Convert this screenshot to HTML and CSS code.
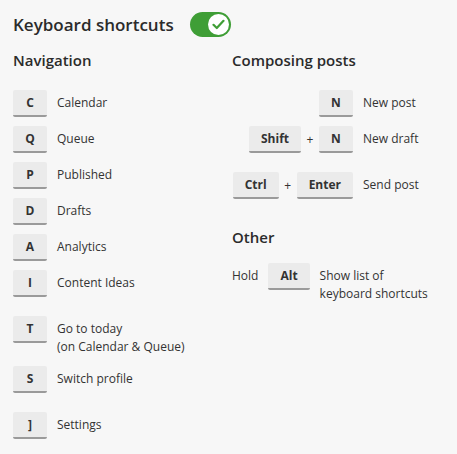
FILE: index.html
```html
<!DOCTYPE html>
<html>
<head>
<meta charset="utf-8">
<link rel="stylesheet" href="styles.css">
</head>
<body>
<div class="page">
  <div class="header">
    <h1 class="title">Keyboard shortcuts</h1>
    <span class="toggle" role="switch" aria-checked="true">
      <span class="knob">
        <svg width="13" height="11" viewBox="0 0 13 11"><path d="M1.5 5.8 L4.8 9 L11.5 1.8" fill="none" stroke="#3f9e36" stroke-width="2.2" stroke-linecap="round" stroke-linejoin="round"/></svg>
      </span>
    </span>
  </div>
  <div class="columns">
    <section class="col">
      <h2 class="section-title">Navigation</h2>
      <div class="row"><span class="key">C</span><span class="label">Calendar</span></div>
      <div class="row"><span class="key">Q</span><span class="label">Queue</span></div>
      <div class="row"><span class="key">P</span><span class="label">Published</span></div>
      <div class="row"><span class="key">D</span><span class="label">Drafts</span></div>
      <div class="row"><span class="key">A</span><span class="label">Analytics</span></div>
      <div class="row"><span class="key">I</span><span class="label">Content Ideas</span></div>
      <div class="row group"><span class="key">T</span><span class="label">Go to today<br>(on Calendar &amp; Queue)</span></div>
      <div class="row group-sm"><span class="key">S</span><span class="label">Switch profile</span></div>
      <div class="row group"><span class="key">]</span><span class="label">Settings</span></div>
    </section>
    <section class="col">
      <h2 class="section-title">Composing posts</h2>
      <div class="row"><span class="combo"><span class="key">N</span></span><span class="label">New post</span></div>
      <div class="row"><span class="combo"><span class="key">Shift</span><span class="plus">+</span><span class="key">N</span></span><span class="label">New draft</span></div>
      <div class="row group"><span class="combo"><span class="key">Ctrl</span><span class="plus">+</span><span class="key">Enter</span></span><span class="label">Send post</span></div>
      <h2 class="section-title other">Other</h2>
      <div class="row"><span class="hold">Hold</span><span class="key">Alt</span><span class="label">Show list of<br>keyboard shortcuts</span></div>
    </section>
  </div>
</div>
</body>
</html>
```
FILE: styles.css
```css
html, body {
  margin: 0;
  padding: 0;
  background: #f7f7f7;
}
body {
  font-family: "Open Sans", "Noto Sans", sans-serif;
  color: #333;
}
.page {
  padding: 12px 13px;
}
.header {
  display: flex;
  align-items: center;
  gap: 16px;
  height: 25px;
}
.title {
  margin: 0;
  font-size: 17px;
  font-weight: 600;
  color: #2b2b2b;
  line-height: 25px;
}
.toggle {
  display: flex;
  align-items: center;
  justify-content: flex-end;
  width: 41px;
  height: 25px;
  padding: 2px;
  box-sizing: border-box;
  border-radius: 13px;
  background: #3f9e36;
}
.knob {
  width: 21px;
  height: 21px;
  border-radius: 50%;
  background: #fff;
  display: flex;
  align-items: center;
  justify-content: center;
}
.columns {
  display: grid;
  grid-template-columns: 219px 1fr;
  margin-top: 13px;
}
.col {
  display: flex;
  flex-direction: column;
  align-items: flex-start;
}
.section-title {
  margin: 0 0 20px;
  font-size: 15px;
  font-weight: 600;
  line-height: 20px;
  color: #2b2b2b;
}
.section-title.other {
  margin-top: 19px;
  margin-bottom: 16px;
}
.row {
  display: flex;
  align-items: flex-start;
  margin-bottom: 9px;
}
.row.group { margin-top: 10px; }
.row.group-sm { margin-top: 1px; }
.key {
  box-sizing: border-box;
  min-width: 34px;
  height: 27px;
  padding: 0 12px;
  background: #ebebeb;
  border-radius: 2px;
  border-bottom: 2px solid #9a9a9a;
  font-size: 12px;
  font-weight: 700;
  line-height: 25px;
  text-align: center;
  color: #333;
}
.label {
  margin-left: 10px;
  padding-top: 4px;
  font-size: 12px;
  line-height: 18px;
}
.combo {
  display: flex;
  justify-content: flex-end;
  width: 121px;
}
.plus {
  width: 18px;
  text-align: center;
  font-size: 12px;
  line-height: 27px;
}
.hold {
  font-size: 12px;
  line-height: 18px;
  padding-top: 4px;
  margin-right: 10px;
}
```
